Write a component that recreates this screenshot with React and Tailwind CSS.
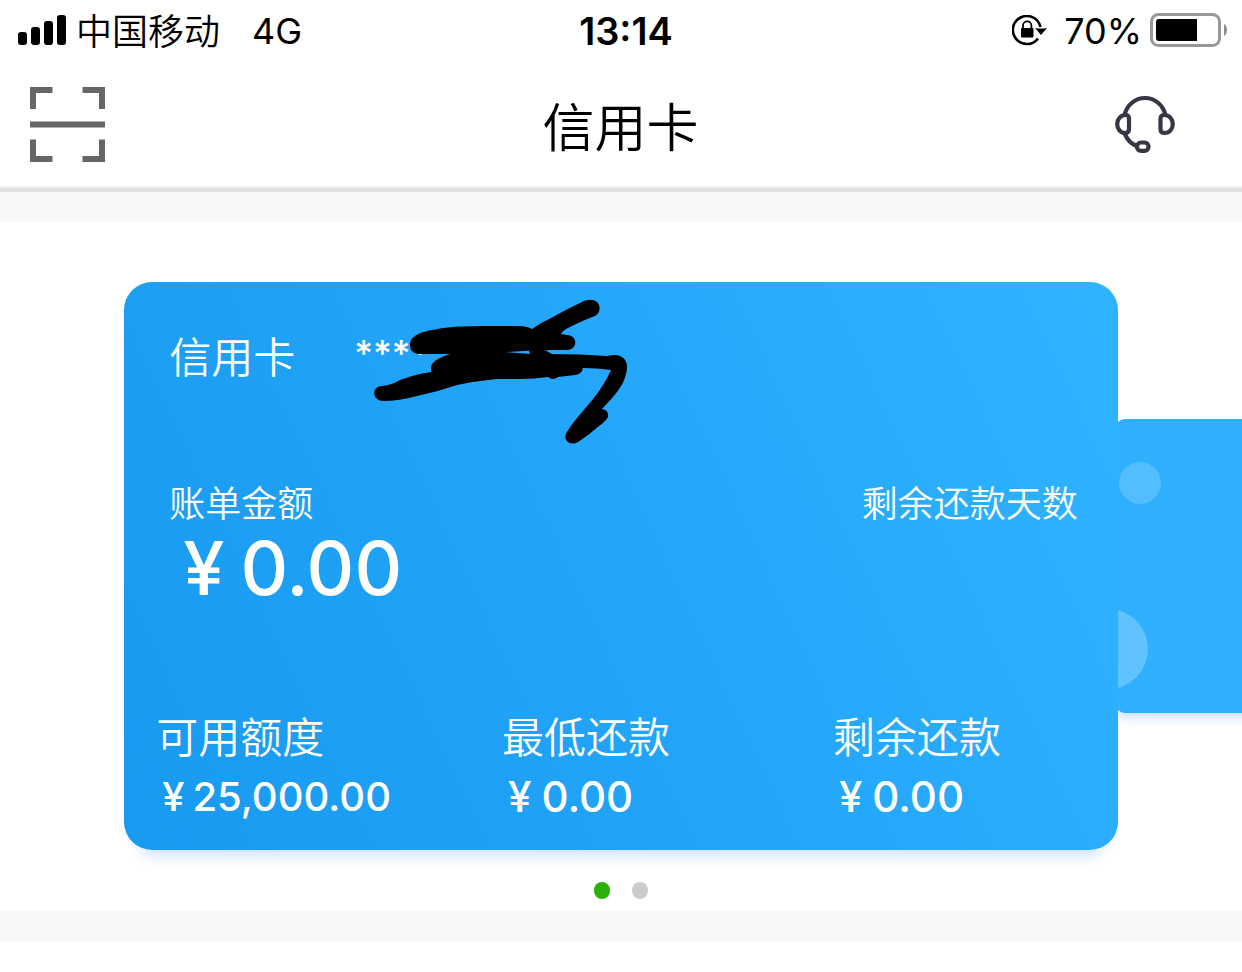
const limits = [
  { label: '可用额度', amount: '25,000.00', size: 'text-[40px] gap-2' },
  { label: '最低还款', amount: '0.00', size: 'text-[42px] gap-2.5' },
  { label: '剩余还款', amount: '0.00', size: 'text-[42px] gap-2.5' },
];

const SignalIcon = () => (
  <svg className="w-12 h-8" viewBox="0 0 48 32" aria-hidden="true">
    <rect x="0" y="17" width="9" height="13" rx="3" />
    <rect x="13" y="12" width="9" height="18" rx="3" />
    <rect x="26" y="6" width="9" height="24" rx="3" />
    <rect x="39" y="0" width="9" height="30" rx="3" />
  </svg>
);

const RotationLockIcon = () => (
  <svg className="w-9 h-8" viewBox="0 0 36 32" aria-hidden="true">
    <path d="M28.5 12A14 14 0 1 0 26 23.500" fill="none" stroke="#000" strokeWidth="2.6" />
    <path d="M23 13Q29 14 35 13L29 20Z" />
    <rect x="9" y="13" width="12.500" height="9.500" rx="1" />
    <path d="M11 14V10.500a4.200 4.200 0 0 1 8.400 0V14" fill="none" stroke="#000" strokeWidth="1.800" />
  </svg>
);

const BatteryIcon = () => (
  <svg className="w-20 h-9" viewBox="0 0 80 36" aria-hidden="true">
    <rect x="1.500" y="1.500" width="68" height="31" rx="7" fill="none" stroke="#999" strokeWidth="3" />
    <path d="M9 6H47V28H9a3 3 0 0 1-3-3V9a3 3 0 0 1 3-3Z" />
    <path d="M74 11c4 2 4 10 0 12Z" fill="#8c8c8c" />
  </svg>
);

const ScanIcon = () => (
  <svg className="w-[75px] h-[75px]" viewBox="0 0 75 75" fill="none" stroke="#666" strokeWidth="6" aria-hidden="true">
    <path d="M3 22V3H22.500M52.500 3H72V22M3 52.500V72H22.500M52.500 72H72V52.500M0 37.500H75" />
  </svg>
);

const HeadsetIcon = () => (
  <svg className="w-[60px] h-[58px]" viewBox="0 0 60 58" fill="none" stroke="#383544" strokeWidth="4.2" aria-hidden="true">
    <path d="M9.500 20C12 10 20 3 30 3S48 10 50.500 20" />
    <path d="M14 23.500V34q0 4-4 4C5.500 38 2.200 34 2.200 29S6 20 10.500 20q3.500 0 3.500 3.500Z" />
    <path d="M45.500 23.500V34q0 4 4 4C54.500 38 57.800 34 57.800 29S54 20 49.500 20q-4 0-4 3.500Z" />
    <path d="M9.500 38c2.500 7 6.500 11 13 13.500" />
    <rect x="22" y="47.500" width="11.500" height="8.400" rx="4" />
  </svg>
);

// Marker strokes that hide the card number
const Scribble = () => (
  <svg
    className="absolute left-[250px] top-[16px] w-[260px] h-[150px]"
    viewBox="0 0 260 150"
    aria-hidden="true"
  >
    <path d="M36 47C36 40 42 36 50 34Q70 28 106 28H144Q153 28 158 31Q168 24 179 19Q193 11 206 5Q213 1 218 2C227 3 228 14 221 18Q210 22 196 29Q189 32 187 36L193 37C204 37 204 52 193 52H179Q156 52 133 54Q108 56 83 56H44Q36 55 36 47Z" />
    <path d="M57 69C58 62 72 56 86 54Q108 51 131 54L156 56 154 50H168Q174 54 178 56Q206 56 233 58C248 54 256 62 252 76C249 89 240 98 228 111Q235 112 234 119Q232 123 225 128Q215 137 204 144C195 149 188 141 193 134C198 125 210 112 219 101Q231 86 237 72Q223 70 209 70Q208 76 201 77L184 79Q179 83 174 79Q160 81 146 81H123Q102 83 83 87Q63 94 43 98Q25 103 9 103C-3 102-2 88 8 88Q18 87 26 82Q42 76 57 74Z" />
  </svg>
);

const App = () => {
  return (
    <div className="min-h-screen bg-white text-black font-['Inter','Noto_Sans_CJK_SC',sans-serif]">
      {/* Status bar */}
      <div className="h-[62px] px-[18px] grid grid-cols-[1fr_auto_1fr] items-center text-[36px] leading-none">
        <div className="flex items-center">
          <SignalIcon />
          <span className="ml-2.5 pt-0.5 font-[350]">中国移动</span>
          <span className="ml-8">4G</span>
        </div>
        <span className="ml-2.5 text-[38px] font-semibold">13:14</span>
        <div className="flex items-center justify-end -mr-1.5">
          <RotationLockIcon />
          <span className="ml-4 mr-2">70%</span>
          <BatteryIcon />
        </div>
      </div>

      {/* Header */}
      <header className="h-[130px] pl-[30px] pr-[67px] pb-0.5 grid grid-cols-[1fr_auto_1fr] items-center border-b-4 border-[#e0e0e0] shadow-[inset_0_-4px_2px_-2px_#f0f0f0]">
        <button type="button" aria-label="扫一扫" className="justify-self-start">
          <ScanIcon />
        </button>
        <h1 className="text-[52px] leading-none font-[350] ml-9 pt-2.5">信用卡</h1>
        <button type="button" aria-label="客服" className="justify-self-end">
          <HeadsetIcon />
        </button>
      </header>
      <div className="h-[30px] bg-[#f7f7f7]" />

      {/* Card carousel */}
      <main className="pt-[60px] pb-3 overflow-hidden">
        <div className="flex items-center">
          <section className="relative z-10 ml-[10%] w-4/5 shrink-0 h-[568px] rounded-[28px] bg-linear-[65deg] from-[#179aef] via-[#23a6f9] to-[#30b3ff] text-white shadow-[0_20px_16px_-16px_#c4dcfa] flex flex-col">
            <div className="pl-[45px] pt-[52px] flex items-start">
              <h2 className="text-[42px] leading-[48px] font-[350]">信用卡</h2>
              <span className="ml-[59px] text-[36px] leading-[38px] font-medium">****</span>
            </div>
            <Scribble />

            <div className="pl-[45px] pr-10 mt-[98px] flex justify-between">
              <div>
                <p className="text-[36px] leading-[48px] font-[350]">账单金额</p>
                <p className="ml-3.5 text-[74px] leading-[80px] font-medium flex gap-4">
                  <span>¥</span>
                  <span>0.00</span>
                </p>
              </div>
              <p className="text-[36px] leading-[48px] font-[350]">剩余还款天数</p>
            </div>

            <dl className="mt-auto mb-6 pl-8 grid grid-cols-[346fr_331fr_285fr]">
              {limits.map((item) => (
                <div key={item.label}>
                  <dt className="text-[42px] leading-[60px] font-[350]">{item.label}</dt>
                  <dd className={`ml-1.5 leading-[58px] font-medium flex ${item.size}`}>
                    <span>¥</span>
                    <span>{item.amount}</span>
                  </dd>
                </div>
              ))}
            </dl>
          </section>

          {/* Next card */}
          <div className="relative w-2/5 shrink-0 h-[294px] -ml-1 rounded-xl overflow-clip bg-[#2fb0ff] shadow-[0_6px_12px_-2px_#c4dcfa]">
            <div className="absolute left-[5px] top-[43px] w-[42px] h-[42px] rounded-full bg-white/17" />
            <div className="absolute -left-[46px] top-[190px] w-[80px] h-[80px] rounded-full bg-white/24" />
          </div>
        </div>

        <div className="mt-8 flex justify-center gap-[22px]">
          <span className="w-4 h-[17px] rounded-full bg-[#2bb20a]" />
          <span className="w-4 h-[17px] rounded-full bg-[#c9cecc]" />
        </div>
      </main>
      <div className="h-[30px] bg-[#f7f7f7]" />
    </div>
  );
};

export default App;
